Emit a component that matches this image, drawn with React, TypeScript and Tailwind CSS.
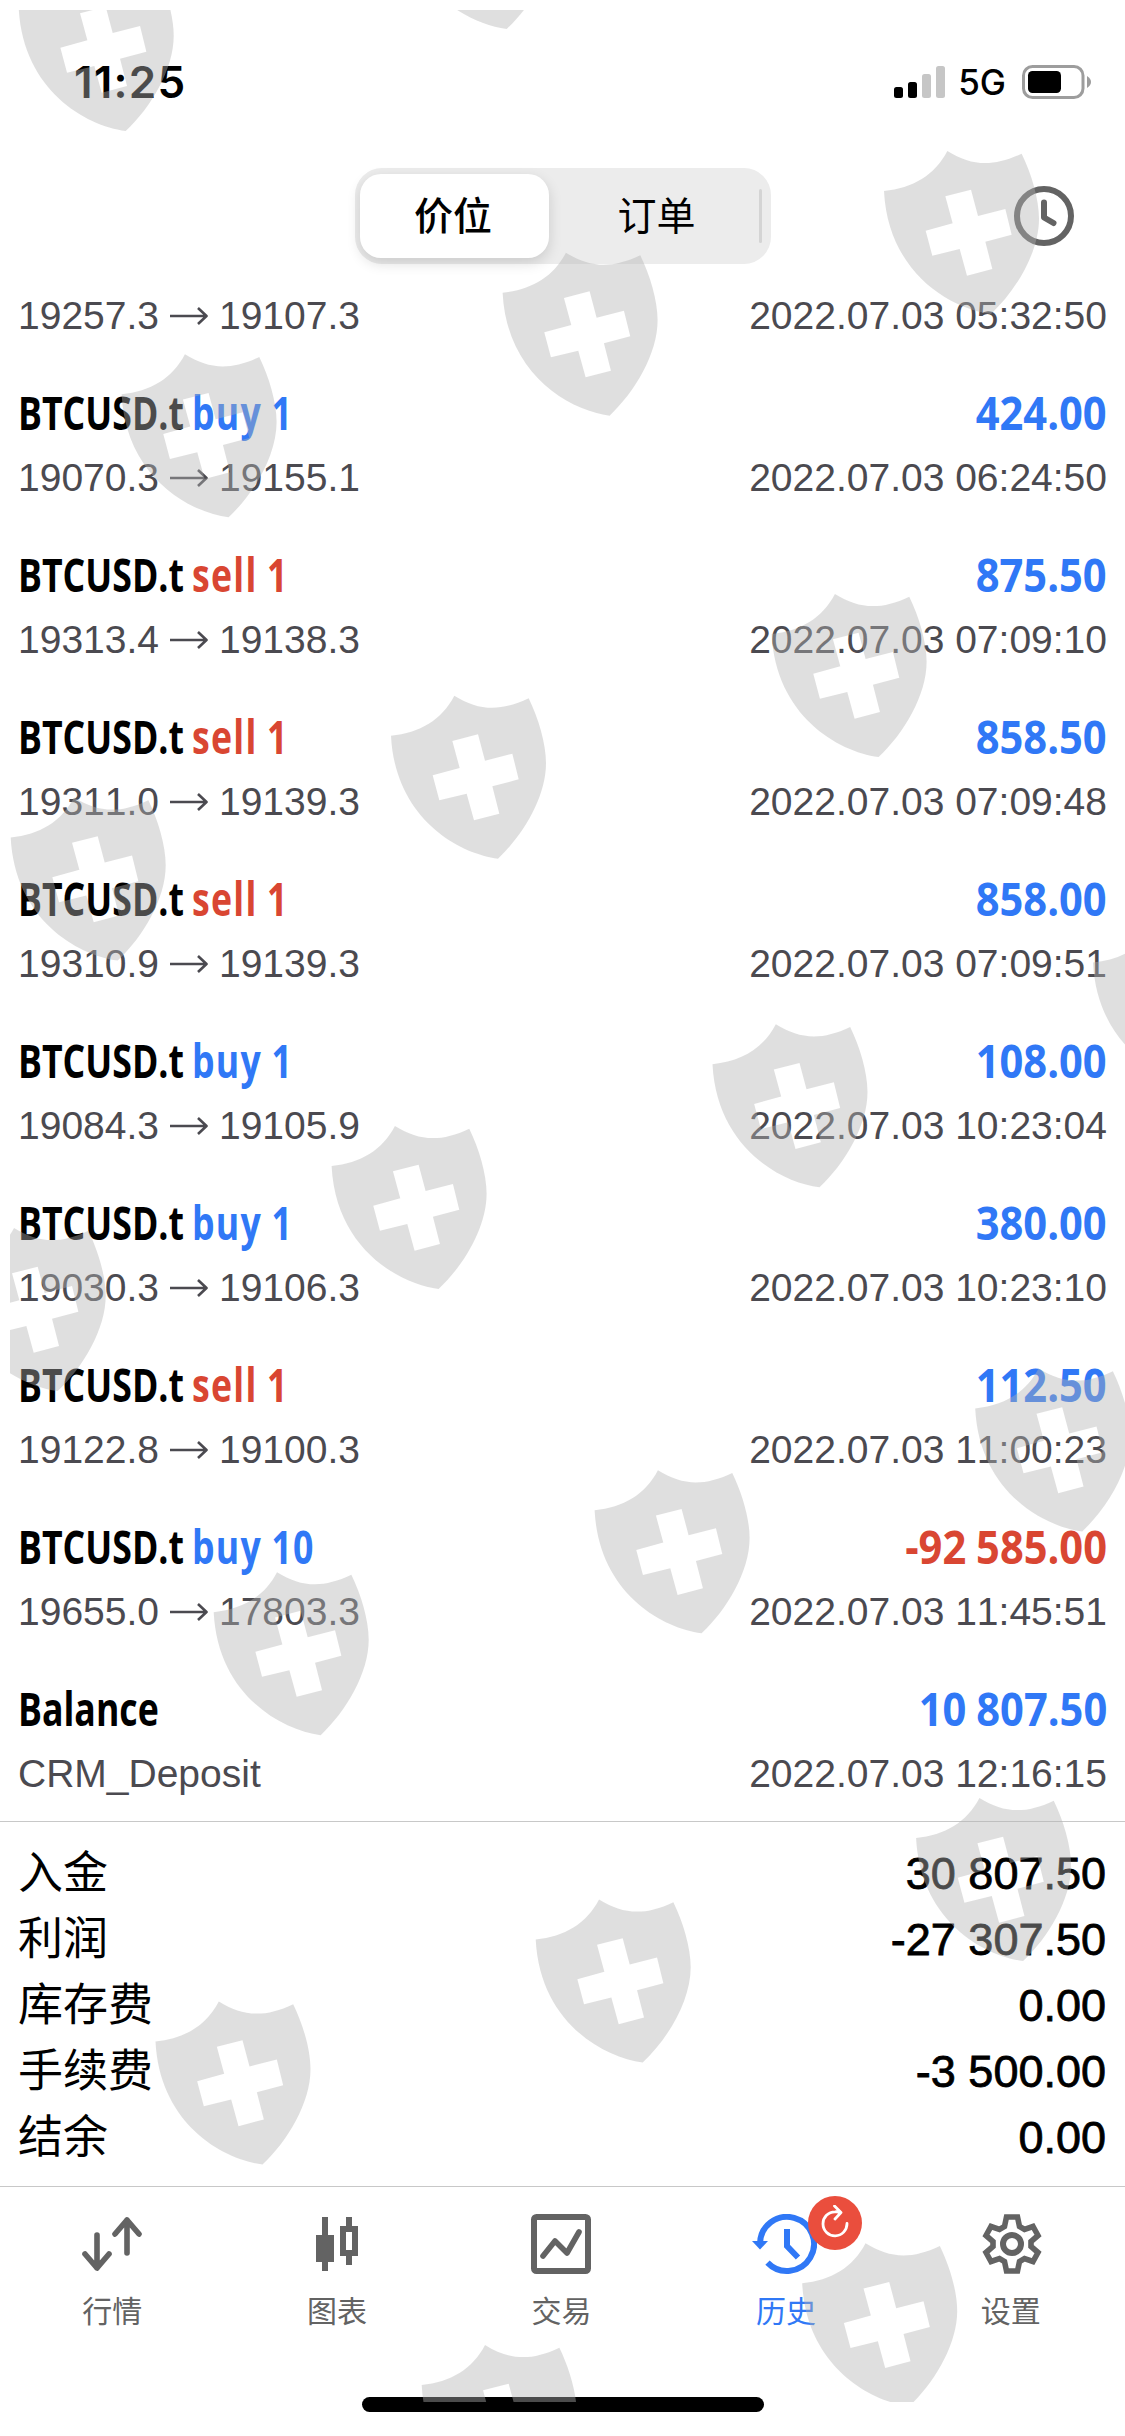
import type { ReactNode } from 'react';

type Deal = {
  symbol: string;
  side?: 'buy' | 'sell';
  volume?: number;
  from?: string;
  to?: string;
  note?: string;
  profit: string;
  time: string;
};

const deals: Deal[] = [
  { symbol: 'BTCUSD.t', side: 'buy', volume: 1, from: '19070.3', to: '19155.1', profit: '424.00', time: '2022.07.03 06:24:50' },
  { symbol: 'BTCUSD.t', side: 'sell', volume: 1, from: '19313.4', to: '19138.3', profit: '875.50', time: '2022.07.03 07:09:10' },
  { symbol: 'BTCUSD.t', side: 'sell', volume: 1, from: '19311.0', to: '19139.3', profit: '858.50', time: '2022.07.03 07:09:48' },
  { symbol: 'BTCUSD.t', side: 'sell', volume: 1, from: '19310.9', to: '19139.3', profit: '858.00', time: '2022.07.03 07:09:51' },
  { symbol: 'BTCUSD.t', side: 'buy', volume: 1, from: '19084.3', to: '19105.9', profit: '108.00', time: '2022.07.03 10:23:04' },
  { symbol: 'BTCUSD.t', side: 'buy', volume: 1, from: '19030.3', to: '19106.3', profit: '380.00', time: '2022.07.03 10:23:10' },
  { symbol: 'BTCUSD.t', side: 'sell', volume: 1, from: '19122.8', to: '19100.3', profit: '112.50', time: '2022.07.03 11:00:23' },
  { symbol: 'BTCUSD.t', side: 'buy', volume: 10, from: '19655.0', to: '17803.3', profit: '-92 585.00', time: '2022.07.03 11:45:51' },
  { symbol: 'Balance', note: 'CRM_Deposit', profit: '10 807.50', time: '2022.07.03 12:16:15' },
];

const summary = [
  { label: '入金', value: '30 807.50' },
  { label: '利润', value: '-27 307.50' },
  { label: '库存费', value: '0.00' },
  { label: '手续费', value: '-3 500.00' },
  { label: '结余', value: '0.00' },
];

// Top-left tip of every shield in the watermark layer
const shields = [
  [82, -32], [463, -134], [947.3, 151], [565.9, 252.7], [184.9, 354.3],
  [834.9, 594], [454.3, 695.7], [74, 797.5], [1156.3, 922.5], [775.8, 1024.3],
  [394.9, 1126], [14, 1228], [1038.5, 1368.5], [657.9, 1470.3], [277, 1572.2],
  [979.4, 1798], [599, 1899.5], [218.8, 2001.5], [865.5, 2243.3], [485, 2345],
];

function Watermark() {
  return (
    <svg className="pointer-events-none absolute left-[10px] top-[10px]" width="1115" height="2392" viewBox="10 10 1115 2392">
      <defs>
        <path
          id="shield"
          fillRule="evenodd"
          d="M63 167C150 158 215 120 253 47C325 92 390 96 476 55C505 115 528 190 528 250C528 350 460 465 384 536C260 520 75 410 63 167Z
             M247 183L269 264L188 286L208 361L290 341L312 421L388 401L367 319L446 298L427 221L345 242L324 163Z"
        />
      </defs>
      {shields.map(([x, y]) => (
        <use
          key={`${x}-${y}`}
          href="#shield"
          fill="#b3b3b3"
          fillOpacity="0.42"
          transform={`translate(${x - 84.3} ${y - 15.7}) scale(0.33333)`}
        />
      ))}
    </svg>
  );
}

function StatusBar() {
  return (
    <div className="flex h-[164px] items-start justify-between pl-[74px] pr-[32px] pt-[60px]">
      <span className="font-[Inter,sans-serif] text-[44px] font-semibold leading-[44px] tracking-[1.2px]">11:25</span>
      <div className="flex items-center">
        <svg className="mr-[12px]" width="52" height="44" viewBox="0 0 52 44">
          <rect x="0" y="27" width="9" height="11" rx="2.5" />
          <rect x="14" y="22" width="9" height="16" rx="2.5" />
          <rect x="28" y="14" width="9" height="24" rx="2.5" fill="#c6c6c6" />
          <rect x="42" y="6" width="9" height="32" rx="2.5" fill="#c6c6c6" />
        </svg>
        <span className="mr-[16px] font-[Inter,sans-serif] text-[35px] font-medium leading-[44px]">5G</span>
        <svg width="71" height="44" viewBox="0 0 71 44">
          <rect x="1.5" y="6.5" width="59.5" height="31" rx="9" fill="none" stroke="#9d9d9d" strokeWidth="3" />
          <rect x="6" y="11" width="33" height="22" rx="4.5" />
          <path d="M65 16C68 18 69 20 69 22C69 24 68 26 65 28Z" fill="#9d9d9d" />
        </svg>
      </div>
    </div>
  );
}

function Header() {
  return (
    <header className="grid h-[104px] grid-cols-[1fr_416px_1fr] items-center">
      <div />
      <div className="flex h-24 items-center rounded-[27px] bg-[#ececec] pl-[5px] pr-[9px] font-[Inter,'Noto_Sans_CJK_SC',sans-serif] text-[39px]">
        <button className="h-[84px] w-[189px] rounded-[21px] bg-white pr-[2px] font-medium shadow-[0_5px_14px_rgba(0,0,0,0.14)]">价位</button>
        <button className="flex-1 pl-[6px]">订单</button>
        <div className="h-[54px] w-[3px] rounded-full bg-[#d4d4d4]" />
      </div>
      <div className="flex justify-end pr-[51px]">
        <svg width="60" height="60" viewBox="0 0 60 60" fill="none" stroke="#636363" strokeWidth="6">
          <circle cx="30" cy="30" r="27" />
          <path d="M30 16.5V31.5L39.5 37" strokeLinecap="round" strokeLinejoin="round" />
        </svg>
      </div>
    </header>
  );
}

function PriceLine({ from, to, note, time }: { from?: string; to?: string; note?: string; time: string }) {
  return (
    <div className="flex h-[50px] items-center justify-between text-[39px] leading-[50px] text-[#4b4a50] [font-kerning:none]">
      {note ? (
        <span>{note}</span>
      ) : (
        <span className="flex items-center">
          {from}
          <svg className="ml-[11px] mr-[11px]" width="38" height="20" viewBox="0 0 38 20" fill="none" stroke="currentColor" strokeWidth="2.6">
            <path d="M0 10H36M28 2L36.5 10L28 18" strokeLinejoin="round" />
          </svg>
          {to}
        </span>
      )}
      <span>{time}</span>
    </div>
  );
}

function DealRow({ deal }: { deal: Deal }) {
  const profitColor = deal.profit.startsWith('-') ? 'text-[#d94632]' : 'text-[#3078f6]';
  const sideColor = deal.side === 'sell' ? 'text-[#d94632]' : 'text-[#3078f6]';

  return (
    <li className="h-[162px] pt-[23px]">
      <div className="flex h-[67px] justify-between font-['Open_Sans',sans-serif] text-[46px] font-bold leading-[52px]">
        <span className="origin-left scale-x-[0.775] whitespace-nowrap [word-spacing:-1.5px]">
          {deal.symbol} {deal.side && <span className={`tracking-[1.6px] ${sideColor}`}>{deal.side} {deal.volume}</span>}
        </span>
        <span className={`origin-right scale-x-[0.905] whitespace-nowrap [word-spacing:-1px] ${profitColor}`}>{deal.profit}</span>
      </div>
      <PriceLine {...deal} />
    </li>
  );
}

function Tab({ label, active, children }: { label: string; active?: boolean; children: ReactNode }) {
  return (
    <button className={`flex flex-col items-center pt-[27px] ${active ? 'text-[#3078f6]' : 'text-[#636363]'}`}>
      <span className="relative block h-[60px] w-[60px]">{children}</span>
      <span className="mt-[13px] text-[30px] leading-[44px]">{label}</span>
    </button>
  );
}

function TabBar() {
  return (
    <nav className="grid h-[211px] grid-cols-5 border-t border-[#c8c8c8] pr-[2px] font-['Noto_Sans_CJK_SC',sans-serif]">
      <Tab label="行情">
        <svg width="60" height="60" viewBox="0 0 60 60" fill="none" stroke="currentColor" strokeWidth="5.6" strokeLinecap="round" strokeLinejoin="round">
          <path d="M15 21V54M3 40L15 54L27 40M45 39V6M33 20L45 6L57 20" />
        </svg>
      </Tab>
      <Tab label="图表">
        <svg width="60" height="60" viewBox="0 0 60 60" fill="currentColor">
          <path d="M15 3H21V21H27V48H21V57H15V48H9V21H15Z" />
          <path fillRule="evenodd" d="M39 3H45V12H51V42H45V51H39V42H33V12H39ZM39 18V36H45V18Z" />
        </svg>
      </Tab>
      <Tab label="交易">
        <svg width="60" height="60" viewBox="0 0 60 60" fill="none" stroke="currentColor" strokeWidth="6" strokeLinejoin="round">
          <rect x="3" y="3" width="54" height="54" rx="2.5" />
          <path d="M12 42L24 27L36 39L48 18" strokeLinecap="round" strokeWidth="5.6" />
        </svg>
      </Tab>
      <Tab label="历史" active>
        <svg className="absolute -left-[5px] top-0" width="66" height="60" viewBox="0 0 66 60" fill="none" stroke="currentColor" strokeWidth="6">
          <path d="M9 30A27 27 0 1 1 16.5 48.6" />
          <path d="M36 15V32L47 43.5" />
          <path d="M1 27H17L9 35.5Z" fill="currentColor" stroke="none" />
        </svg>
        <span className="absolute -top-[18px] left-[52px] flex h-[54px] w-[54px] items-center justify-center rounded-full bg-[#ea4e3d]">
          <svg width="30" height="36" viewBox="0 0 30 36" fill="none" stroke="white" strokeWidth="2.8" strokeLinecap="round" strokeLinejoin="round">
            <path d="M27 18.5A12 12 0 1 1 15 6.8Q18 6.5 20.5 7.5M14.5 1L21 7.5L15 14" />
          </svg>
        </span>
      </Tab>
      <Tab label="设置">
        <svg className="ml-px" width="60" height="60" viewBox="0 0 60 60" fill="none" stroke="currentColor" strokeWidth="5.6">
          <path d="M24.5 3H35.5L37.5 12.5L42.5 15.5L51 12.5L56 21.5L49 27.5V32.5L56 38.5L51 47.5L42.5 44.5L37.5 47.5L35.5 57H24.5L22.5 47.5L17.5 44.5L9 47.5L4 38.5L11 32.5V27.5L4 21.5L9 12.5L17.5 15.5L22.5 12.5Z" />
          <circle cx="30" cy="30" r="9" strokeWidth="6" />
        </svg>
      </Tab>
    </nav>
  );
}

export default function App() {
  return (
    <div className="relative flex h-[2436px] w-[1125px] flex-col overflow-hidden bg-white font-['Liberation_Sans','Noto_Sans_CJK_SC',sans-serif] text-black">
      <StatusBar />
      <Header />

      <main className="flex flex-1 flex-col">
        <ul className="h-[1553px] px-[18px] pt-[22px]">
          <li className="h-[73px] pt-px">
            <PriceLine from="19257.3" to="19107.3" time="2022.07.03 05:32:50" />
          </li>
          {deals.map((deal) => (
            <DealRow key={deal.time} deal={deal} />
          ))}
        </ul>

        <dl className="h-[365px] border-t border-[#c8c8c8] pl-[18px] pr-[19px] pt-[17px] text-[45px] leading-[66px]">
          {summary.map(({ label, value }) => (
            <div key={label} className="flex h-[66px] items-start justify-between">
              <dt className="-mt-[2px] font-['Noto_Sans_CJK_SC',sans-serif]">{label}</dt>
              <dd className="pt-[2px] [-webkit-text-stroke:0.8px_black]">{value}</dd>
            </div>
          ))}
        </dl>
      </main>

      <TabBar />
      <div className="mx-auto mb-6 h-[15px] w-[402px] shrink-0 rounded-full bg-black" />
      <Watermark />
    </div>
  );
}
